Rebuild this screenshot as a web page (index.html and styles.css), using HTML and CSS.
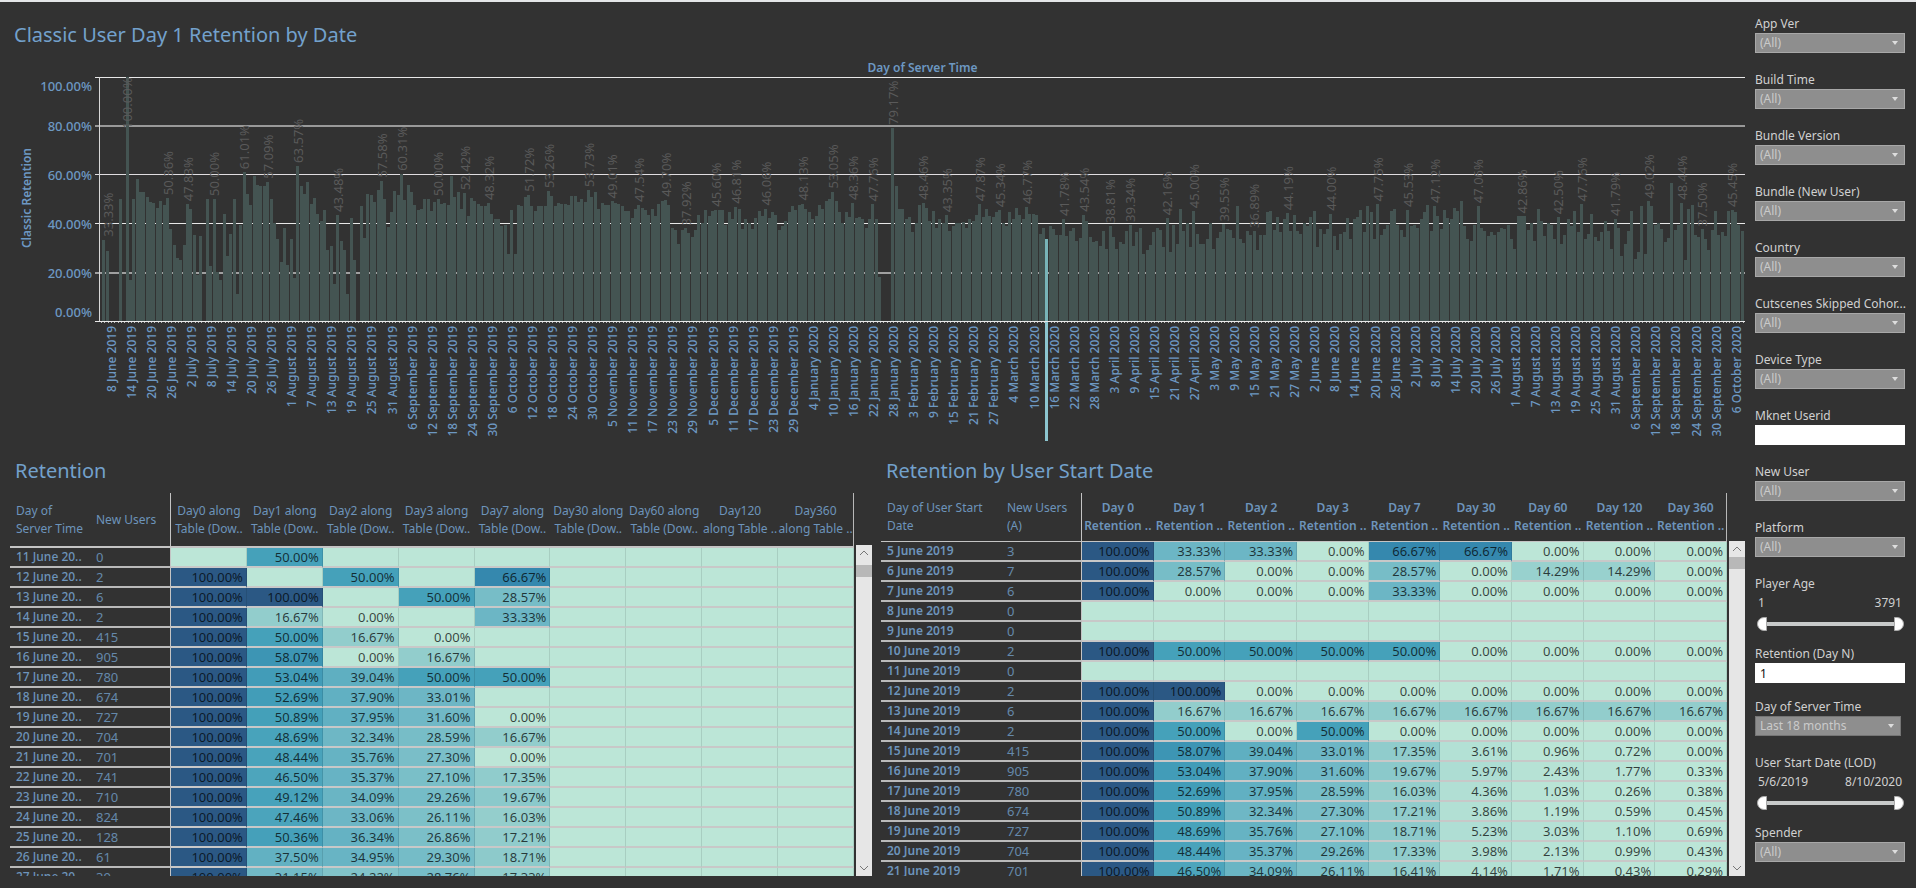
FILE: index.html
```html
<!DOCTYPE html>
<html lang="en">
<head>
<meta charset="utf-8">
<title>Retention Dashboard</title>
<link rel="stylesheet" href="styles.css">
</head>
<body>
<div class="dashboard">
  <main class="content">
    <section class="chart-panel">
      <h1 class="panel-title">Classic User Day 1 Retention by Date</h1>
      <svg class="chart" id="chart" role="img" aria-label="Classic retention by day of server time"></svg>
    </section>
    <div class="tables">
      <section class="table-panel table-panel-left">
        <h2 class="panel-title">Retention</h2>
        <div class="viewport">
          <div class="clip"><table class="grid" id="server-table"></table></div>
          <div class="scrollbar">
            <button class="scroll-button" aria-label="Scroll up"><svg width="10" height="6" viewBox="0 0 10 6"><path d="M1 5 5 1l4 4"/></svg></button>
            <div class="scroll-thumb"></div>
            <button class="scroll-button scroll-down" aria-label="Scroll down"><svg width="10" height="6" viewBox="0 0 10 6"><path d="M1 1l4 4 4-4"/></svg></button>
          </div>
        </div>
      </section>
      <section class="table-panel table-panel-right">
        <h2 class="panel-title">Retention by User Start Date</h2>
        <div class="viewport">
          <div class="clip"><table class="grid grid-start" id="start-table"></table></div>
          <div class="scrollbar">
            <button class="scroll-button" aria-label="Scroll up"><svg width="10" height="6" viewBox="0 0 10 6"><path d="M1 5 5 1l4 4"/></svg></button>
            <div class="scroll-thumb"></div>
            <button class="scroll-button scroll-down" aria-label="Scroll down"><svg width="10" height="6" viewBox="0 0 10 6"><path d="M1 1l4 4 4-4"/></svg></button>
          </div>
        </div>
      </section>
    </div>
  </main>
  <aside class="filters">
    <div class="filter"><label for="app-ver">App Ver</label><div class="select"><select id="app-ver"><option>(All)</option></select></div></div>
    <div class="filter"><label for="build-time">Build Time</label><div class="select"><select id="build-time"><option>(All)</option></select></div></div>
    <div class="filter"><label for="bundle-version">Bundle Version</label><div class="select"><select id="bundle-version"><option>(All)</option></select></div></div>
    <div class="filter"><label for="bundle-new">Bundle (New User)</label><div class="select"><select id="bundle-new"><option>(All)</option></select></div></div>
    <div class="filter"><label for="country">Country</label><div class="select"><select id="country"><option>(All)</option></select></div></div>
    <div class="filter"><label for="cutscenes">Cutscenes Skipped Cohor...</label><div class="select"><select id="cutscenes"><option>(All)</option></select></div></div>
    <div class="filter"><label for="device">Device Type</label><div class="select"><select id="device"><option>(All)</option></select></div></div>
    <div class="filter"><label for="userid">Mknet Userid</label><input class="text" id="userid" type="text"></div>
    <div class="filter"><label for="new-user">New User</label><div class="select"><select id="new-user"><option>(All)</option></select></div></div>
    <div class="filter"><label for="platform">Platform</label><div class="select"><select id="platform"><option>(All)</option></select></div></div>
    <div class="filter filter-range">
      <label for="age-min">Player Age</label>
      <div class="range-values"><span>1</span><span>3791</span></div>
      <div class="range"><input class="range-min" id="age-min" type="range" min="1" max="3791" value="1"><input class="range-max" type="range" min="1" max="3791" value="3791" aria-label="Player Age maximum"></div>
    </div>
    <div class="filter filter-tight"><label for="day-n">Retention (Day N)</label><input class="text" id="day-n" type="text" value="1"></div>
    <div class="filter"><label for="server-day">Day of Server Time</label><div class="select select-date"><select id="server-day"><option>Last 18 months</option></select></div></div>
    <div class="filter filter-range">
      <label for="start-min">User Start Date (LOD)</label>
      <div class="range-values"><span>5/6/2019</span><span>8/10/2020</span></div>
      <div class="range"><input class="range-min" id="start-min" type="range" min="0" max="491" value="0"><input class="range-max" type="range" min="0" max="491" value="491" aria-label="User Start Date maximum"></div>
    </div>
    <div class="filter"><label for="spender">Spender</label><div class="select"><select id="spender"><option>(All)</option></select></div></div>
  </aside>
</div>
<script src="dashboard.js"></script>
</body>
</html>
```
FILE: styles.css
```css
* { box-sizing: border-box; }

body {
  margin: 0;
  background: #323232;
  color: #d0d0d0;
  font-family: "Noto Sans", "Open Sans", sans-serif;
  font-size: 12px;
}

.dashboard {
  display: grid;
  grid-template-columns: minmax(0, 1fr) 150px;
  column-gap: 10px;
  height: 100vh;
  padding-right: 11px;
  border-top: 2px solid #e4e6e8;
  border-bottom: 1px solid #fff;
  overflow: hidden;
}

.content { display: flex; flex-direction: column; min-height: 0; }

.panel-title {
  margin: 0;
  color: #73a1cc;
  font-size: 20px;
  font-weight: 400;
  line-height: 28px;
}

.chart-panel { padding-top: 19px; }
.chart-panel .panel-title { padding-left: 14px; }

.chart { display: block; width: 100%; height: 400px; }
.chart text { fill: #6d98c2; font-size: 12px; font-weight: 500; }
.chart .axis-title { font-weight: 600; text-anchor: middle; }
.chart .tick { font-size: 13px; text-anchor: end; }
.chart .day { text-anchor: end; }
.chart .mark { fill: #5a5a5a; font-size: 13px; font-weight: 400; }
.chart .bar { fill: #445452; }
.chart .bar-active { fill: #78b3b7; }
.chart .drop-line { fill: #8cc5cf; }

.tables {
  display: grid;
  grid-template-columns: minmax(0, 872fr) minmax(0, 873fr);
  flex: 1;
  min-height: 0;
  padding: 8px 0 12px;
}
.table-panel { display: flex; flex-direction: column; min-height: 0; }
.table-panel .panel-title { padding-left: 5px; }
.table-panel-left { padding-left: 10px; }
.table-panel-right { padding-left: 9px; }

.viewport {
  display: grid;
  grid-template-columns: minmax(0, 1fr) 16px;
  column-gap: 2px;
  flex: 1;
  min-height: 0;
  margin-top: 8px;
}
.clip { overflow: hidden; }

.grid { width: 100%; table-layout: fixed; border-collapse: separate; border-spacing: 0; }
.grid col.date { width: 80px; }
.grid col.users { width: 81px; }
.grid-start col.date { width: 120px; }
.grid th, .grid td { padding: 0; white-space: nowrap; }

.grid thead th {
  height: 55px;
  border-bottom: 2px solid #c4c4c4;
  color: #6d94bb;
  font-weight: 400;
  line-height: 18px;
}
.grid-start thead th { height: 49px; border-bottom-width: 1px; }
.grid-start thead th.measure { font-weight: 600; }
.grid thead th.measure:last-child { border-right: 1px solid #b8b8b8; }
.grid thead th.dimension { padding-left: 6px; text-align: left; }

.grid tbody th, .grid tbody td {
  height: 20px;
  border-bottom: 2px solid #c8c8c8;
  font-size: 13px;
  line-height: 18px;
}
.grid tbody th, .grid tbody td.users {
  padding-left: 6px;
  border-bottom-color: #bababa;
  color: #6d94bb;
  text-align: left;
}
.grid tbody th { font-size: 12px; font-weight: 500; }
.grid-start tbody th { font-weight: 600; }
.grid .users { border-right: 1px solid #c4c4c4; }
.grid tbody td.users { color: #6589ab; }
.grid tbody td.value {
  padding-right: 3px;
  border-right: 1px solid rgba(0, 0, 0, 0.1);
  color: rgba(0, 0, 0, 0.72);
  text-align: right;
}

.scrollbar { display: flex; flex-direction: column; margin-top: 52px; background: #e6e6e6; }
.table-panel-right .scrollbar { margin-top: 48px; }
.scroll-button {
  display: flex;
  align-items: center;
  justify-content: center;
  height: 16px;
  padding: 0;
  border: 0;
  background: #e6e6e6;
}
.scroll-button svg { fill: none; stroke: #777; }
.scroll-down { margin-top: auto; }
.scroll-thumb { height: 12px; background: #b8b8b8; }
.table-panel-left .scroll-thumb { margin-top: 4px; }

.filters { padding-top: 13px; }
.filter { margin-bottom: 18px; }
.filter label { display: block; height: 18px; line-height: 18px; white-space: nowrap; }
.filter-range { margin-bottom: 11px; }
.filter-tight { margin-bottom: 15px; }

.select { position: relative; height: 20px; }
.select::after {
  content: "";
  position: absolute;
  top: 8px;
  right: 7px;
  border: 3px solid transparent;
  border-top: 4px solid #ddd;
  border-bottom: 0;
  pointer-events: none;
}
.select select {
  display: block;
  width: 100%;
  height: 20px;
  padding: 0 4px;
  border: 1px solid #a8a8a8;
  border-radius: 0;
  background: #8e8e8e;
  color: #cacaca;
  font: 12px/18px "Noto Sans", "Open Sans", sans-serif;
  appearance: none;
}
.select-date { width: 146px; }
.select-date select { border-color: #757575; }

.text {
  display: block;
  width: 100%;
  height: 20px;
  padding: 0 4px;
  border: 1px solid #fff;
  background: #fff;
  color: #111;
  font: 12px/18px "Noto Sans", "Open Sans", sans-serif;
}

.range-values { display: flex; justify-content: space-between; padding: 0 3px; line-height: 20px; }
.range { display: grid; align-items: center; height: 21px; padding: 0 1px 0 2px; }
.range::before { content: ""; grid-area: 1 / 1; height: 4px; margin: 0 4px; background: #c8caca; }
.range input {
  grid-area: 1 / 1;
  width: 100%;
  height: 14px;
  margin: 0;
  background: transparent;
  appearance: none;
  pointer-events: none;
}
.range input::-webkit-slider-thumb {
  width: 10px;
  height: 14px;
  border: 1px solid #aaa;
  border-radius: 8px 0 0 8px;
  background: #fff;
  appearance: none;
  pointer-events: auto;
}
.range .range-max::-webkit-slider-thumb { border-radius: 0 8px 8px 0; }
```
FILE: dashboard.js
```js
// Daily classic retention in percent, starting 5 June 2019; 0 means no mark.
const daily = [
  0, 33.33, 28.57, 0, 0, 0, 50, 0, 100, 16.67, 50, 58.07, 53.04, 52.69, 50.89, 48.69, 48.44, 46.5, 49.12, 47.46,
  50.36, 37.5, 31.15, 26, 25.2, 31, 47.83, 45.9, 35.2, 19, 35, 0, 50, 22.5, 50, 20, 17, 43.8, 26.6, 35.6,
  50, 11, 39.2, 61.01, 52, 47.7, 59.6, 55.8, 55.3, 55.3, 57.09, 49.9, 40, 33.5, 24, 38, 23, 33.5, 17.5, 63.57,
  55.3, 52, 57, 48, 50.4, 43.8, 41, 45.6, 29, 30.8, 15, 43.48, 32.7, 29, 11, 42.3, 25.2, 0, 47, 34.2,
  52, 51.6, 48.8, 53.7, 57.58, 50, 38.6, 44.5, 53.3, 51.6, 60.31, 49.7, 55.8, 53, 47.7, 45.6, 45.9, 49.8, 49.8, 45.2,
  48.8, 50, 48, 48.2, 47.7, 59.6, 51, 53, 45.9, 52.42, 43, 50.5, 49.2, 48, 47, 47.3, 48.32, 43.8, 42, 41.8,
  39, 39.4, 27.4, 45.6, 27.4, 47.4, 47, 51, 51.72, 47, 45, 47, 47, 47, 53.26, 51.2, 47, 48.4, 47.8, 48,
  47.7, 51.2, 51.2, 48.9, 50.1, 48.9, 53.73, 51, 52.7, 45.9, 48.4, 47.7, 47.5, 49.01, 48.4, 48, 47.1, 44.9, 45.2, 42.3,
  45.9, 47.54, 46.3, 45.6, 43.4, 45.9, 43, 48, 49.2, 49.7, 47.7, 38.1, 37.4, 31.5, 37.4, 37.92, 36.2, 34.5, 37.4, 43.4,
  40.3, 45.6, 43, 45.2, 45.6, 45.6, 45.6, 39.5, 44.5, 41.6, 46.81, 45.9, 37.7, 41.6, 40.3, 37.7, 42.3, 45.2, 43, 46.06,
  42.3, 44.5, 43.4, 37.4, 38.8, 41, 44.5, 47, 45.6, 47.5, 48.13, 45.9, 44.5, 41.6, 43, 47.4, 45.9, 49, 50.1, 53.05,
  49, 44.5, 40.3, 44.5, 42.7, 48.36, 42.3, 42.7, 41.6, 38.1, 41.6, 47.76, 41.6, 18.2, 0, 0, 0, 79.17, 55.2, 45.9,
  45.9, 41.6, 42.7, 36.6, 40, 47.4, 48.46, 46.3, 41, 44.9, 38.1, 41.6, 40.3, 43.35, 37, 38.8, 40.3, 40.3, 40.4, 38.1,
  41.6, 41, 43.4, 47.87, 42.7, 45.9, 43, 42.7, 44.5, 45.34, 40.3, 38.8, 44.5, 42, 46.3, 43.4, 42, 46.77, 43.8, 43.8,
  43.4, 35.6, 38.1, 33.5, 38.8, 37.7, 35.2, 35.2, 41.78, 34.8, 37, 38.1, 32.7, 34.2, 43.54, 41, 34.5, 32.4, 32.7, 30.8,
  37, 29.5, 38.81, 34.5, 29.5, 32.4, 31.5, 37, 39.34, 30.8, 36.6, 38.1, 27.3, 29, 31.1, 36.3, 38.1, 37.4, 30.5, 42.16,
  28.4, 39.5, 31.5, 45.9, 37, 40.3, 30.5, 45, 35.5, 31.5, 31.5, 33.8, 40, 29.5, 34.2, 36.3, 39.55, 37.7, 37.3, 34.2,
  47, 33.7, 31.9, 37, 35.2, 36.89, 29, 35.2, 35.2, 44.8, 45.2, 37.3, 42.7, 36.6, 42, 44.19, 37, 43.4, 37, 35.5,
  40.3, 38.8, 42.7, 44.9, 30.5, 37.7, 35.5, 37.7, 44, 34.8, 28.9, 35.6, 36.3, 42.3, 33.5, 42, 42.7, 45.6, 36.6, 47,
  44.5, 33.8, 47.75, 35.2, 37.7, 39.5, 44.9, 45.9, 39.5, 37.4, 34.5, 45.53, 38.8, 39.5, 38.1, 42, 44.5, 47.4, 37, 47.12,
  43, 37.7, 45.6, 42.3, 41.6, 46.3, 45.2, 49.2, 38.8, 33.8, 32.7, 39.5, 47.06, 38.1, 37, 34.8, 36.3, 35.2, 36.6, 38.1,
  37.7, 39.5, 33.8, 29.5, 43, 42.86, 43, 37.4, 40.3, 32.7, 45.9, 41, 34.8, 40.3, 39.5, 33.8, 42.5, 31.5, 35.2, 41.6,
  38.8, 44.9, 36.3, 47.76, 33.5, 35.6, 43.8, 34.5, 32.7, 36.3, 41, 37, 29.5, 41.79, 38.1, 26.6, 31.5, 37, 44.9, 25.5,
  28.4, 47, 27.4, 49.02, 47, 39.5, 40, 37.7, 32.4, 34.2, 56.6, 37.4, 39.5, 48.44, 25.2, 45.9, 47.4, 35.2, 34.5, 37.5,
  33.5, 28.9, 37.4, 45.2, 35.2, 36.3, 34.8, 44.9, 45.45, 44.5, 39.5, 37
];

const labelled = [
  1, 8, 20, 26, 34, 43, 50, 59, 71, 84, 90, 101, 109, 116, 128, 134, 146, 153, 161, 169, 175, 184, 190, 199, 210,
  219, 225, 231, 237, 246, 253, 263, 269, 277, 288, 294, 302, 308, 319, 327, 336, 345, 355, 368, 382, 391, 399,
  412, 425, 436, 443, 453, 463, 473, 479, 488
];

const ACTIVE_DAY = 283;
const MONTHS = ["January", "February", "March", "April", "May", "June", "July", "August", "September", "October", "November", "December"];
const chart = document.getElementById("chart");

function add(name, attributes, text) {
  const node = document.createElementNS("http://www.w3.org/2000/svg", name);
  for (const key in attributes) node.setAttribute(key, attributes[key]);
  if (text) node.textContent = text;
  chart.appendChild(node);
}

function drawChart() {
  chart.textContent = "";
  const left = 100, right = chart.clientWidth, top = 28, base = 272;
  const step = (right - left) / daily.length;
  const scale = (base - top) / 100;

  add("text", { class: "axis-title", x: (left + right) / 2, y: 23 }, "Day of Server Time");
  add("text", { class: "axis-title", transform: "translate(31 149) rotate(-90)" }, "Classic Retention");

  [[0, 1, "#e8e8e8"], [20, 2, "#a0a0a0"], [40, 1, "#e8e8e8"], [60, 1, "#e0dde0"], [80, 2, "#999"], [100, 1, "#e8e8e8"]].forEach(([value, size, fill]) => {
    const y = Math.floor(base - value * scale);
    add("rect", { x: left - 5, y, width: right - left + 5, height: size, fill });
    const textY = value === 100 ? y + 14 : value === 0 ? y - 4 : y + 6;
    add("text", { class: "tick", x: 92, y: textY }, value.toFixed(2) + "%");
  });
  add("rect", { x: left - 1, y: top, width: 1, height: base - top, fill: "#d8d8d8" });

  daily.forEach((value, i) => {
    const x = Math.round(left + i * step);
    if (value) {
      const height = Math.round(value * scale);
      add("rect", { class: i === ACTIVE_DAY ? "bar-active" : "bar", x: x - 1, y: base - height, width: 3, height });
    }
    add("rect", { x: x + 1, y: base + 1, width: 1, height: 1, fill: "#bbb" });
  });
  add("rect", { class: "drop-line", x: Math.round(left + ACTIVE_DAY * step) - 1, y: base + 1, width: 3, height: 119 });

  labelled.forEach(i => {
    const x = Math.max(left + (i + 0.5) * step + 4, left + 13);
    const y = Math.max(base - daily[i] * scale - 3, i === 8 ? 80 : 0);
    add("text", { class: "mark", transform: `translate(${x} ${y}) rotate(-90)` }, daily[i].toFixed(2) + "%");
  });

  for (let i = 3; i < daily.length; i += 6) {
    const date = new Date(Date.UTC(2019, 5, 5 + i));
    const label = `${date.getUTCDate()} ${MONTHS[date.getUTCMonth()]} ${date.getUTCFullYear()}`;
    add("text", { class: "day", transform: `translate(${left + (i + 0.5) * step + 4} 277) rotate(-90)` }, label);
  }
}

// Colour stops of the sequential palette: percent, red, green, blue.
const STOPS = [[0, 188, 230, 215], [16.67, 146, 205, 204], [33.33, 108, 182, 197], [50, 69, 161, 186], [66.67, 53, 136, 174], [100, 43, 88, 132]];

function colour(value) {
  let k = 1;
  while (k < STOPS.length - 1 && value > STOPS[k][0]) k++;
  const a = STOPS[k - 1], b = STOPS[k];
  const t = (value - a[0]) / (b[0] - a[0]);
  return `rgb(${[1, 2, 3].map(c => Math.round(a[c] + (b[c] - a[c]) * t)).join(",")})`;
}

function fillTable(id, dimensions, measures, rows) {
  const cols = '<col class="date"><col class="users">' + "<col>".repeat(9);
  const head = dimensions.map((d, i) => `<th scope="col" class="dimension${i ? " users" : ""}">${d}</th>`).join("") +
    measures.map(m => `<th scope="col" class="measure">${m}</th>`).join("");
  const body = rows.map(([date, users, ...values]) => {
    let cells = "";
    for (let i = 0; i < 9; i++) {
      const v = values[i];
      const text = v === undefined || v === null ? "" : v.toFixed(2) + "%";
      cells += `<td class="value" style="background-color:${colour(v || 0)}">${text}</td>`;
    }
    return `<tr><th scope="row">${date}</th><td class="users">${users}</td>${cells}</tr>`;
  }).join("");
  document.getElementById(id).innerHTML = `<colgroup>${cols}</colgroup><thead><tr>${head}</tr></thead><tbody>${body}</tbody>`;
}

const none = null;
fillTable("server-table",
  ["Day of<br>Server Time", "New Users"],
  ["Day0 along<br>Table (Dow..", "Day1 along<br>Table (Dow..", "Day2 along<br>Table (Dow..", "Day3 along<br>Table (Dow..", "Day7 along<br>Table (Dow..", "Day30 along<br>Table (Dow..", "Day60 along<br>Table (Dow..", "Day120<br>along Table ..", "Day360<br>along Table .."],
  [
    ["11 June 20..", 0, none, 50],
    ["12 June 20..", 2, 100, none, 50, none, 66.67],
    ["13 June 20..", 6, 100, 100, none, 50, 28.57],
    ["14 June 20..", 2, 100, 16.67, 0, none, 33.33],
    ["15 June 20..", 415, 100, 50, 16.67, 0],
    ["16 June 20..", 905, 100, 58.07, 0, 16.67],
    ["17 June 20..", 780, 100, 53.04, 39.04, 50, 50],
    ["18 June 20..", 674, 100, 52.69, 37.9, 33.01],
    ["19 June 20..", 727, 100, 50.89, 37.95, 31.6, 0],
    ["20 June 20..", 704, 100, 48.69, 32.34, 28.59, 16.67],
    ["21 June 20..", 701, 100, 48.44, 35.76, 27.3, 0],
    ["22 June 20..", 741, 100, 46.5, 35.37, 27.1, 17.35],
    ["23 June 20..", 710, 100, 49.12, 34.09, 29.26, 19.67],
    ["24 June 20..", 824, 100, 47.46, 33.06, 26.11, 16.03],
    ["25 June 20..", 128, 100, 50.36, 36.34, 26.86, 17.21],
    ["26 June 20..", 61, 100, 37.5, 34.95, 29.3, 18.71],
    ["27 June 20..", 39, 100, 31.15, 24.22, 28.76, 17.33]
  ]);

fillTable("start-table",
  ["Day of User Start<br>Date", "New Users<br>(A)"],
  [0, 1, 2, 3, 7, 30, 60, 120, 360].map(d => `Day ${d}<br>Retention ..`),
  [
    ["5 June 2019", 3, 100, 33.33, 33.33, 0, 66.67, 66.67, 0, 0, 0],
    ["6 June 2019", 7, 100, 28.57, 0, 0, 28.57, 0, 14.29, 14.29, 0],
    ["7 June 2019", 6, 100, 0, 0, 0, 33.33, 0, 0, 0, 0],
    ["8 June 2019", 0],
    ["9 June 2019", 0],
    ["10 June 2019", 2, 100, 50, 50, 50, 50, 0, 0, 0, 0],
    ["11 June 2019", 0],
    ["12 June 2019", 2, 100, 100, 0, 0, 0, 0, 0, 0, 0],
    ["13 June 2019", 6, 100, 16.67, 16.67, 16.67, 16.67, 16.67, 16.67, 16.67, 16.67],
    ["14 June 2019", 2, 100, 50, 0, 50, 0, 0, 0, 0, 0],
    ["15 June 2019", 415, 100, 58.07, 39.04, 33.01, 17.35, 3.61, 0.96, 0.72, 0],
    ["16 June 2019", 905, 100, 53.04, 37.9, 31.6, 19.67, 5.97, 2.43, 1.77, 0.33],
    ["17 June 2019", 780, 100, 52.69, 37.95, 28.59, 16.03, 4.36, 1.03, 0.26, 0.38],
    ["18 June 2019", 674, 100, 50.89, 32.34, 27.3, 17.21, 3.86, 1.19, 0.59, 0.45],
    ["19 June 2019", 727, 100, 48.69, 35.76, 27.1, 18.71, 5.23, 3.03, 1.1, 0.69],
    ["20 June 2019", 704, 100, 48.44, 35.37, 29.26, 17.33, 3.98, 2.13, 0.99, 0.43],
    ["21 June 2019", 701, 100, 46.5, 34.09, 26.11, 16.41, 4.14, 1.71, 0.43, 0.29]
  ]);

drawChart();
window.addEventListener("resize", drawChart);
```
